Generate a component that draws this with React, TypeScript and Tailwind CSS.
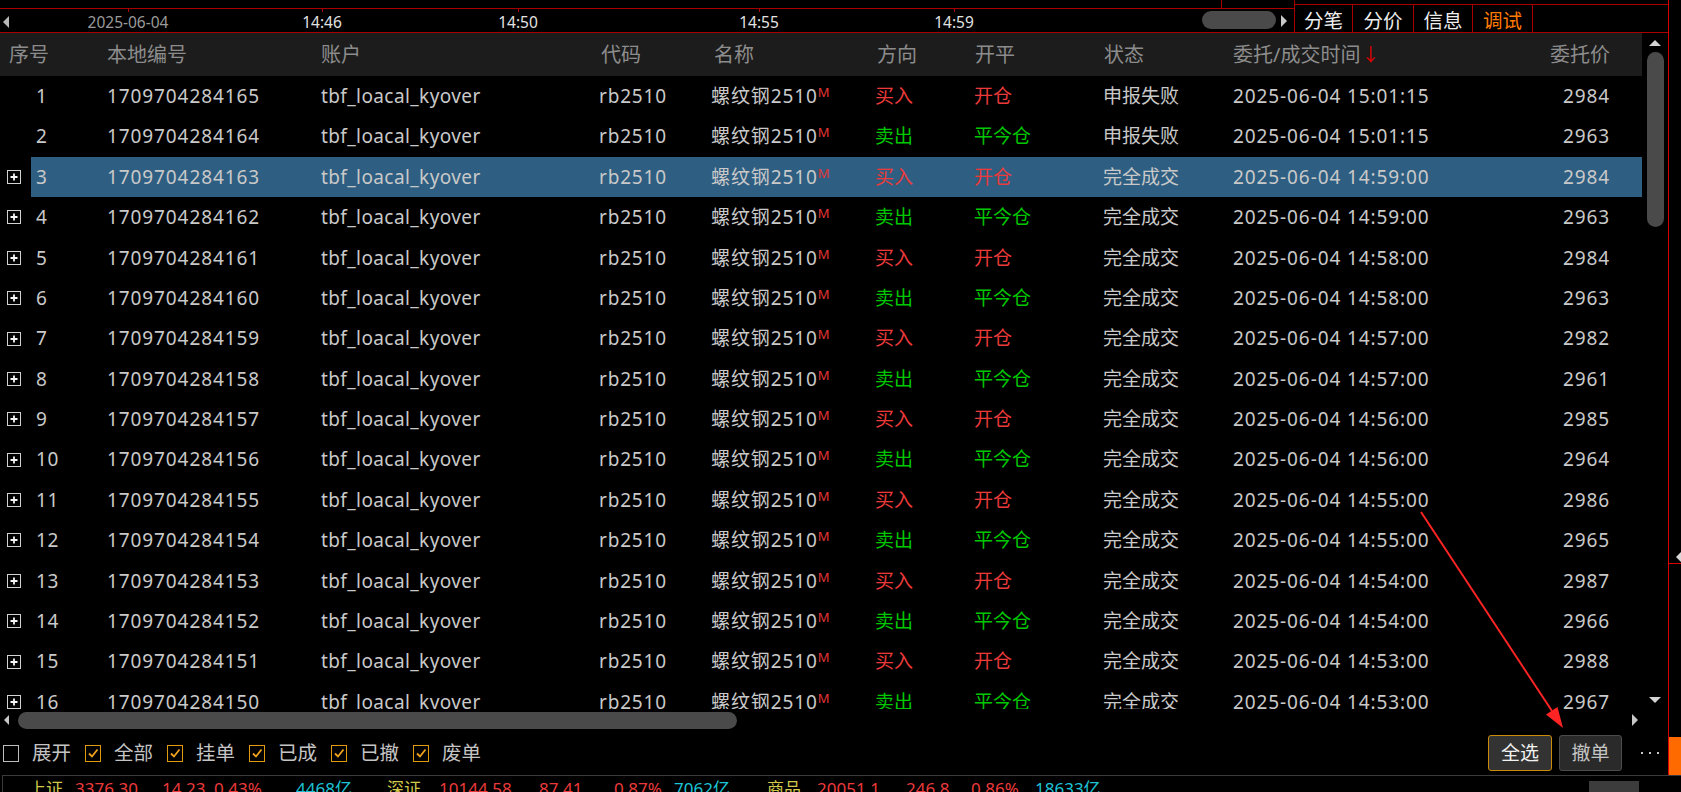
import React from 'react';

type Row = {
  no: number;
  id: string;
  buy: boolean;
  failed: boolean;
  time: string;
  price: number;
};

const times = ['15:01:15', '15:01:15', '14:59:00', '14:59:00', '14:58:00', '14:58:00', '14:57:00', '14:57:00', '14:56:00', '14:56:00', '14:55:00', '14:55:00', '14:54:00', '14:54:00', '14:53:00', '14:53:00'];
const prices = [2984, 2963, 2984, 2963, 2984, 2963, 2982, 2961, 2985, 2964, 2986, 2965, 2987, 2966, 2988, 2967];

const rows: Row[] = times.map((t, i) => ({
  no: i + 1,
  id: String(1709704284165 - i),
  buy: i % 2 === 0,
  failed: i < 2,
  time: `2025-06-04 ${t}`,
  price: prices[i],
}));

const ticks = [
  { label: '2025-06-04', gap: 'ml-[69px]', color: 'text-[#9a9a9a]' },
  { label: '14:46', gap: 'ml-[94px]', color: 'text-[#e2e2e2]' },
  { label: '14:50', gap: 'ml-[96px]', color: 'text-[#e2e2e2]' },
  { label: '14:55', gap: 'ml-[141px]', color: 'text-[#e2e2e2]' },
  { label: '14:59', gap: 'ml-[95px]', color: 'text-[#e2e2e2]' },
];

function PlusBox() {
  return (
    <svg width="14" height="14" viewBox="0 0 14 14">
      <rect x="0.5" y="0.5" width="13" height="13" fill="none" stroke="#d2d2d2" />
      <path d="M3.5 7h7M7 3.5v7" stroke="#f4f4f4" strokeWidth="1.8" />
    </svg>
  );
}

function Check({ label, checked }: { label: string; checked: boolean }) {
  return (
    <div className="flex items-center">
      <div
        className={`flex h-[17px] w-[16px] items-center justify-center border ${
          checked ? 'border-[#e09a10]' : 'border-[#bdbdbd]'
        }`}
      >
        {checked && (
          <svg width="12" height="12" viewBox="0 0 12 12">
            <polyline points="2,6.5 5,9.5 10.5,2.5" fill="none" stroke="#f0a21c" strokeWidth="1.8" />
          </svg>
        )}
      </div>
      <span className="ml-[13px] text-[19.5px] text-[#c4c4c4]">{label}</span>
    </div>
  );
}

function TableRow({ r, selected }: { r: Row; selected: boolean }) {
  const red = 'text-[#ec3a3a]';
  const green = 'text-[#00c800]';
  return (
    <div className="flex h-[40.4px] shrink-0">
      <div className="flex w-[31px] shrink-0 items-center pl-[7px]">{r.no > 2 && <PlusBox />}</div>
      <div
        className={`grid flex-1 grid-cols-[76px_214px_278px_112px_164px_99px_129px_130px_247px_130px] items-center text-[19px] text-[#c9c9c9] ${
          selected ? 'bg-[#2e5e81]' : ''
        }`}
      >
        <span className="pl-[5px] tracking-[0.6px]">{r.no}</span>
        <span className="tracking-[0.9px]">{r.id}</span>
        <span className="tracking-[0.4px]">tbf_loacal_kyover</span>
        <span className="tracking-[0.8px]">rb2510</span>
        <span className="tracking-[0.9px]">
          螺纹钢2510<span className="align-[6px] text-[13px] tracking-normal text-[#e53535]">M</span>
        </span>
        <span className={r.buy ? red : green}>{r.buy ? '买入' : '卖出'}</span>
        <span className={r.buy ? red : green}>{r.buy ? '开仓' : '平今仓'}</span>
        <span>{r.failed ? '申报失败' : '完全成交'}</span>
        <span className="tracking-[0.9px]">{r.time}</span>
        <span className="text-right tracking-[0.9px]">{r.price}</span>
      </div>
    </div>
  );
}

export default function App() {
  return (
    <div className="relative flex h-[792px] w-[1681px] flex-col overflow-hidden bg-black font-['Noto_Sans','Noto_Sans_CJK_SC',sans-serif]">
      <div className="flex h-[775px] shrink-0">
        {/* main column */}
        <div className="flex w-[1668px] shrink-0 flex-col">
          {/* top bar */}
          <div className="flex h-[33px] shrink-0 border-b border-[#a80000]">
            <div className="flex w-[1294px] shrink-0 flex-col">
              <div className="flex h-[9px] shrink-0 border-b border-[#a80000]">
                <div className="w-[1221px]" />
                <div className="flex-1 border-l border-[#a80000]" />
              </div>
              <div className="flex h-[23px] items-start">
                <div className="ml-[3px] mt-[7px] h-0 w-0 border-y-[6px] border-r-[6px] border-y-transparent border-r-[#b8b8b8]" />
                {ticks.map((t) => (
                  <div key={t.label} className={`flex w-[100px] shrink-0 flex-col items-center ${t.gap}`}>
                    <div className="h-[3px] w-px bg-[#b00000]" />
                    <span className={`mt-[1px] text-[15.5px] leading-[18px] ${t.color}`}>{t.label}</span>
                  </div>
                ))}
                <div className="ml-[198px] mt-[2px] h-[18px] w-[74px] rounded-full bg-[#4a4a4a]" />
                <div className="ml-[5px] mt-[6px] h-0 w-0 border-y-[6px] border-l-[6px] border-y-transparent border-l-[#c8c8c8]" />
              </div>
            </div>
            <div className="flex flex-1 flex-col border-l border-[#a80000]">
              <div className="h-[5px] shrink-0 border-b border-[#a80000]" />
              <div className="flex h-[27px] text-[19.5px] leading-[27px]">
                <div className="flex w-[58px] justify-center border-r border-[#a80000] pt-[2px] text-[#eeeeee]">分笔</div>
                <div className="flex w-[61px] justify-center border-r border-[#a80000] pt-[2px] text-[#eeeeee]">分价</div>
                <div className="flex w-[59px] justify-center border-r border-[#a80000] pt-[2px] text-[#eeeeee]">信息</div>
                <div className="flex w-[60px] justify-center border-r border-[#a80000] pt-[2px] text-[#ff7a00]">调试</div>
              </div>
            </div>
          </div>

          {/* table + vertical scrollbar */}
          <div className="flex h-[676px] shrink-0">
            <div className="flex w-[1642px] shrink-0 flex-col">
              <div className="grid h-[43px] shrink-0 grid-cols-[107px_214px_278px_112px_164px_99px_129px_130px_247px_130px] items-center bg-[#1c1c1c] text-[20px] text-[#8c8c8c]">
                <span className="pl-[9px]">序号</span>
                <span>本地编号</span>
                <span>账户</span>
                <span className="pl-[2px]">代码</span>
                <span className="pl-[3px]">名称</span>
                <span className="pl-[2px]">方向</span>
                <span className="pl-[1px]">开平</span>
                <span className="pl-[1px]">状态</span>
                <span className="flex items-center">
                  委托/成交时间<span className="ml-[1px] text-[18px] text-[#e00000]">↓</span>
                </span>
                <span className="text-right">委托价</span>
              </div>
              <div className="flex h-[633px] flex-col overflow-hidden">
                {rows.map((r) => (
                  <TableRow key={r.no} r={r} selected={r.no === 3} />
                ))}
              </div>
            </div>
            <div className="flex flex-1 flex-col items-center pt-[7px] pb-[6px]">
              <div className="h-0 w-0 border-x-[6px] border-b-[6px] border-x-transparent border-b-[#d4d4d4]" />
              <div className="mt-[6px] h-[175px] w-[17px] rounded-full bg-[#4a4a4a]" />
              <div className="flex-1" />
              <div className="h-0 w-0 border-x-[6px] border-t-[6px] border-x-transparent border-t-[#d4d4d4]" />
            </div>
          </div>

          {/* horizontal scrollbar */}
          <div className="flex h-[22px] shrink-0 items-center">
            <div className="ml-[4px] h-0 w-0 border-y-[5px] border-r-[5px] border-y-transparent border-r-[#c8c8c8]" />
            <div className="ml-[9px] h-[17px] w-[719px] rounded-full bg-[#4a4a4a]" />
            <div className="flex-1" />
            <div className="mr-[30px] h-0 w-0 border-y-[6px] border-l-[6px] border-y-transparent border-l-[#c8c8c8]" />
          </div>

          {/* filters + buttons */}
          <div className="flex h-[44px] shrink-0 items-center pl-[3px] pr-[9px]">
            <div className="flex items-center gap-[14px]">
              <Check label="展开" checked={false} />
              <Check label="全部" checked />
              <Check label="挂单" checked />
              <Check label="已成" checked />
              <Check label="已撤" checked />
              <Check label="废单" checked />
            </div>
            <div className="flex-1" />
            <button className="flex h-[36px] w-[64px] items-center justify-center rounded-[3px] border-[1.5px] border-[#cc8a0a] bg-[#333333] text-[19px] text-[#f2f2f2]">
              全选
            </button>
            <button className="ml-[7px] flex h-[36px] w-[63px] items-center justify-center rounded-[3px] border border-[#4c4c4c] bg-[#2a2a2a] text-[19px] text-[#c4c4c4]">
              撤单
            </button>
            <div className="ml-[19px] flex w-[18px] justify-between">
              <div className="h-[2px] w-[2px] bg-[#c8c8c8]" />
              <div className="h-[2px] w-[2px] bg-[#c8c8c8]" />
              <div className="h-[2px] w-[2px] bg-[#c8c8c8]" />
            </div>
          </div>
        </div>

        {/* right edge strip */}
        <div className="flex flex-1 flex-col border-l border-[#d80000]">
          <div className="h-[551px] shrink-0" />
          <div className="flex h-[12px] shrink-0 items-center justify-end">
            <div className="h-0 w-0 border-y-[5px] border-r-[5px] border-y-transparent border-r-[#d8d8d8]" />
          </div>
          <div className="h-px shrink-0 bg-[#d80000]" />
          <div className="flex-1" />
          <div className="h-[38px] shrink-0 bg-[#ff6a00]" />
        </div>
      </div>

      {/* status bar */}
      <div className="ml-[2px] flex flex-1 items-start overflow-hidden border-l border-t border-[#3a3a3a] pl-[26px] text-[17px] leading-[24px]">
        <span className="w-[46px] shrink-0 pt-[1px] text-[#d2c84a]">上证</span>
        <span className="w-[87px] shrink-0 pt-[1px] text-[#ec3a3a]">3376.30</span>
        <span className="w-[52px] shrink-0 pt-[1px] text-[#ec3a3a]">14.23</span>
        <span className="w-[82px] shrink-0 pt-[1px] text-[#ec3a3a]">0.43%</span>
        <span className="w-[91px] shrink-0 pt-[1px] text-[#1cc4d6]">4468亿</span>
        <span className="w-[52px] shrink-0 pt-[1px] text-[#d2c84a]">深证</span>
        <span className="w-[100px] shrink-0 pt-[1px] text-[#ec3a3a]">10144.58</span>
        <span className="w-[75px] shrink-0 pt-[1px] text-[#ec3a3a]">87.41</span>
        <span className="w-[60px] shrink-0 pt-[1px] text-[#ec3a3a]">0.87%</span>
        <span className="w-[93px] shrink-0 pt-[1px] text-[#1cc4d6]">7062亿</span>
        <span className="w-[50px] shrink-0 pt-[1px] text-[#d2c84a]">商品</span>
        <span className="w-[89px] shrink-0 pt-[1px] text-[#ec3a3a]">20051.1</span>
        <span className="w-[65px] shrink-0 pt-[1px] text-[#ec3a3a]">246.8</span>
        <span className="w-[64px] shrink-0 pt-[1px] text-[#ec3a3a]">0.86%</span>
        <span className="shrink-0 pt-[1px] text-[#1cc4d6]">18633亿</span>
        <div className="flex-1" />
        <div className="mr-[42px] mt-[5px] h-[12px] w-[50px] shrink-0 bg-[#3c3c3c]" />
      </div>

      {/* annotation arrow */}
      <svg className="pointer-events-none absolute left-0 top-0" width="1681" height="792">
        <line x1="1421" y1="512" x2="1552" y2="711" stroke="#ff2424" strokeWidth="2" />
        <polygon points="1563,728 1546,714.5 1557.5,707" fill="#ff2424" />
      </svg>
    </div>
  );
}
